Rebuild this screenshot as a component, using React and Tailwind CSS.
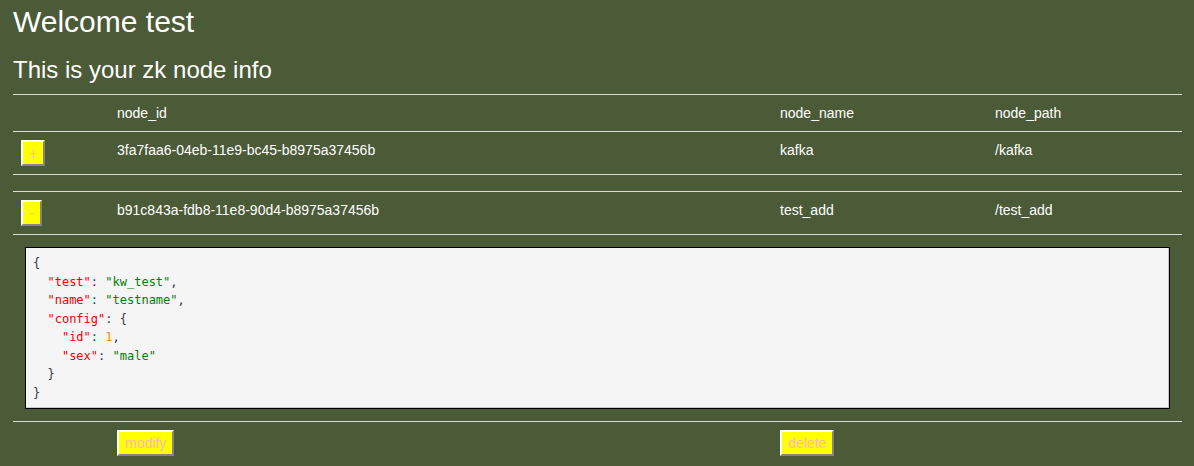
import React, { useState } from 'react';

const nodes = [
  { id: '3fa7faa6-04eb-11e9-bc45-b8975a37456b', name: 'kafka', path: '/kafka' },
  { id: 'b91c843a-fdb8-11e8-90d4-b8975a37456b', name: 'test_add', path: '/test_add' },
];

const cols = 'grid grid-cols-[96px_663px_215px_1fr] border-t border-[#dcdcdc]';

function YellowButton({ children }) {
  return (
    <button className="h-[26px] bg-[#ffff00] text-[#ffb6c1] text-[14px] leading-none px-[6px] border-2 border-t-white border-l-white border-r-[#858585] border-b-[#858585]">
      {children}
    </button>
  );
}

function JsonLine({ depth, children }) {
  return (
    <div className="whitespace-pre">
      {'  '.repeat(depth)}
      {children}
    </div>
  );
}

// keys red, strings green, numbers orange
const K = ({ k }) => <span className="text-[#ee0000]">"{k}"</span>;
const P = ({ c }) => <span className="text-[#333a48]">{c}</span>;
const S = ({ v }) => <span className="text-[#008000]">"{v}"</span>;
const N = ({ v }) => <span className="text-[#f08c28]">{v}</span>;

function JsonBlock() {
  return (
    <pre className="bg-[#f5f5f5] border border-black shadow-[inset_-1px_-1px_0_#c8c8c8] px-[7px] py-[6px] font-['DejaVu_Sans_Mono',monospace] text-[12px] leading-[18.5px]">
      <JsonLine depth={0}><P c="{" /></JsonLine>
      <JsonLine depth={1}><K k="test" /><P c=": " /><S v="kw_test" /><P c="," /></JsonLine>
      <JsonLine depth={1}><K k="name" /><P c=": " /><S v="testname" /><P c="," /></JsonLine>
      <JsonLine depth={1}><K k="config" /><P c=": {" /></JsonLine>
      <JsonLine depth={2}><K k="id" /><P c=": " /><N v="1" /><P c="," /></JsonLine>
      <JsonLine depth={2}><K k="sex" /><P c=": " /><S v="male" /></JsonLine>
      <JsonLine depth={1}><P c="}" /></JsonLine>
      <JsonLine depth={0}><P c="}" /></JsonLine>
    </pre>
  );
}

export default function App() {
  const [open] = useState({ 1: true });

  return (
    <div className="min-h-screen bg-[#4b5a37] text-white font-['Liberation_Sans',Arial,sans-serif] pl-[13px] pr-[12px] pt-[5px]">
      <h1 className="text-[30px] leading-[34px]">Welcome test</h1>
      <h2 className="text-[24px] leading-[28px] mt-[17px] mb-[10px]">This is your zk node info</h2>

      <div className="text-[14px] leading-[20px]">
        <div className={cols}>
          <div className="p-2" />
          <div className="p-2">node_id</div>
          <div className="p-2">node_name</div>
          <div className="p-2">node_path</div>
        </div>

        {nodes.map((n, i) => (
          <React.Fragment key={n.id}>
            <div className={cols}>
              <div className="p-2">
                <YellowButton>{open[i] ? '-' : '+'}</YellowButton>
              </div>
              <div className="p-2">{n.id}</div>
              <div className="p-2">{n.name}</div>
              <div className="p-2">{n.path}</div>
            </div>
            {open[i] ? (
              <div className="border-t border-[#dcdcdc] p-3">
                <JsonBlock />
              </div>
            ) : (
              <div className="border-t border-[#dcdcdc] h-[17px]" />
            )}
          </React.Fragment>
        ))}

        <div className={cols}>
          <div className="p-2" />
          <div className="p-2">
            <YellowButton>modify</YellowButton>
          </div>
          <div className="p-2">
            <YellowButton>delete</YellowButton>
          </div>
          <div className="p-2" />
        </div>
      </div>
    </div>
  );
}
